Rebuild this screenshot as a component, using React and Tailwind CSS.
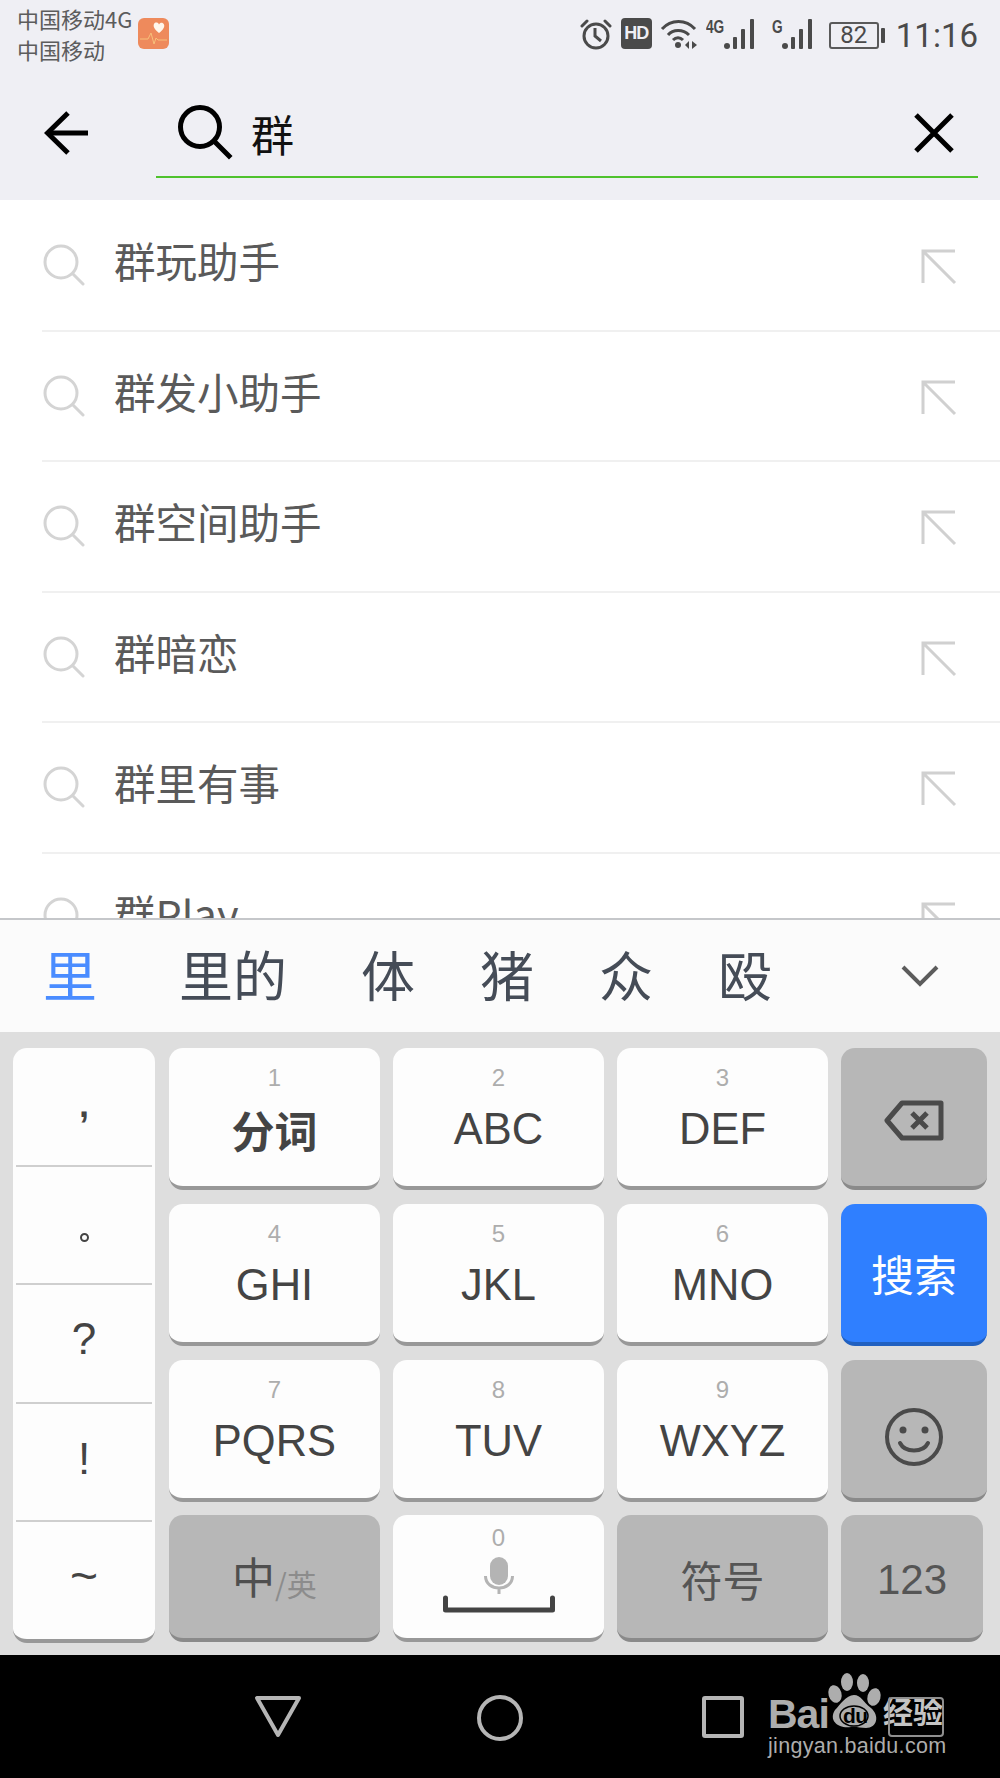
import React from 'react';

const cjk = "font-['Noto_Sans_CJK_SC','Liberation_Sans',sans-serif]";
const latin = "font-['Liberation_Sans','Noto_Sans_CJK_SC',sans-serif]";

const Bars = () => (
  <svg width="33" height="32" viewBox="0 0 33 32" className="text-[#4a4a4a]" fill="currentColor">
    <circle cx="3" cy="27" r="3" />
    <rect x="9" y="18" width="4" height="12" rx="1" />
    <rect x="17" y="10" width="4" height="20" rx="1" />
    <rect x="26" y="0" width="4" height="30" rx="1" />
  </svg>
);

const StatusBar = () => (
  <div className="h-[74px] flex items-start pt-[3px] bg-[#efeff4]">
    <div className={`ml-[17px] text-[22px] leading-[30.5px] text-[#5c5c5c] ${cjk}`}>
      <div>中国移动4G</div>
      <div>中国移动</div>
    </div>
    <svg width="31" height="31" viewBox="0 0 31 31" className="ml-[6px] mt-[15px]">
      <rect width="31" height="31" rx="6" fill="#ee8a5c" />
      <path d="M21 15 C16 11 15 8 16 6 C17 4 20 4 21 6.500 C22 4 25 4 26 6.500 C27 9 25 12 21 15Z" fill="#fff6ec" />
      <path d="M2 21 H10 L13 15 L16 26 L18 20 L20 22 H29" fill="none" stroke="#f7c07a" strokeWidth="1" />
    </svg>
    <div className="ml-auto flex items-start pr-[22px] pt-[15px]">
      {/* alarm */}
      <svg width="32" height="32" viewBox="0 0 32 32" fill="none" stroke="#4a4a4a" strokeWidth="3">
        <circle cx="16" cy="18" r="12" />
        <path d="M15 10 V18 L21 23" strokeWidth="3" />
        <path d="M2 8 L7 3 M25 3 L30 8" strokeLinecap="round" />
      </svg>
      {/* hd */}
      <div className={`ml-[9px] w-[31px] h-[31px] rounded-[4px] bg-[#4a4a4a] text-[#efeff4] text-[18px] leading-[31px] font-bold text-center tracking-[-1px] ${latin}`}>HD</div>
      {/* wifi */}
      <svg width="38" height="32" viewBox="0 0 38 32" fill="none" stroke="#4a4a4a" strokeWidth="3" className="ml-[8px]">
        <path d="M2 11 C11 1 26 1 35 11" />
        <path d="M8 17 C13 11 23 11 29 17" />
        <path d="M13 22 C16 19 20 19 23 22" />
        <circle cx="18" cy="27" r="3" fill="#4a4a4a" stroke="none" />
        <path d="M29 23 V31 L25 27Z M32 23 V31 L37 27Z" fill="#4a4a4a" stroke="none" />
      </svg>
      <div className="ml-[8px] flex items-start">
        <span className={`w-[18px] text-[19px] leading-[17px] font-bold text-[#4a4a4a] origin-left scale-x-[0.72] ${latin}`}>4G</span>
        <div className="mt-[1px]"><Bars /></div>
      </div>
      <div className="ml-[15px] flex items-start">
        <span className={`w-[10px] text-[19px] leading-[17px] font-bold text-[#4a4a4a] origin-left scale-x-[0.72] ${latin}`}>G</span>
        <div className="mt-[1px]"><Bars /></div>
      </div>
      <div className="ml-[14px] mt-[4px] flex items-center">
        <div className="w-[50px] h-[27px] rounded-[3px] border-2 border-[#5a5a5a] text-[#4a4a4a] text-[24px] leading-[23px] text-center font-['Roboto',sans-serif]">82</div>
        <div className="ml-[2px] w-[4px] h-[15px] rounded-[1px] bg-[#4a4a4a]" />
      </div>
      <div className="ml-[11px] text-[33px] leading-[36px] text-[#4a4a4a] font-['Roboto',sans-serif]">11:16</div>
    </div>
  </div>
);

const SearchHeader = () => (
  <div className="h-[126px] flex items-start bg-[#efeff4]">
    <svg width="46" height="46" viewBox="0 0 46 46" fill="none" stroke="#000" strokeWidth="5" className="ml-[44px] mt-[36px]">
      <path d="M44 23 H4" />
      <path d="M24 3 L3.500 23 L24 43" />
    </svg>
    <div className="ml-[66px] w-[822px] h-[104px] border-b-2 border-[#4fc22d] flex items-start">
      <svg width="56" height="56" viewBox="0 0 56 56" fill="none" stroke="#000" strokeWidth="5" className="ml-[21px] mt-[30px]">
        <circle cx="23" cy="23" r="19.500" />
        <path d="M37 37 L52 52" strokeLinecap="square" />
      </svg>
      <span className={`ml-[18px] mt-[31px] text-[43px] leading-[56px] text-[#111] ${cjk}`}>群</span>
      <svg width="42" height="42" viewBox="0 0 42 42" fill="none" stroke="#000" strokeWidth="5" className="ml-auto mr-[23px] mt-[38px]">
        <path d="M3 3 L39 39 M39 3 L3 39" />
      </svg>
    </div>
  </div>
);

const SuggestRow = ({ text }) => (
  <div className="h-[130.6px] shrink-0 ml-[42px] border-b-2 border-[#f0f0f0] flex items-start pt-[43px] pr-[42px]">
    <svg width="42" height="42" viewBox="0 0 42 42" fill="none" stroke="#d4d4d4" strokeWidth="3" className="ml-[1px]">
      <circle cx="18" cy="18" r="16" />
      <path d="M30 30 L40 40" strokeLinecap="round" />
    </svg>
    <span className={`ml-[29px] -mt-[10px] text-[41.5px] leading-[52px] text-[#5a5a5a] ${cjk}`}>{text}</span>
    <svg width="36" height="36" viewBox="0 0 36 36" fill="none" stroke="#d0d0d0" strokeWidth="3" className="ml-auto mt-[5px] -translate-x-[1px]">
      <path d="M34 2 H2 V34 M2 2 L34 34" />
    </svg>
  </div>
);

const Key = ({ digit, children, className = '' }) => (
  <div className={`h-[142px] w-[211px] rounded-[14px] bg-[#fdfdfd] border-b-[4px] border-[#989898] flex flex-col items-center ${className}`}>
    <span className={`mt-[15px] text-[24px] leading-[30px] text-[#adadad] ${latin}`}>{digit}</span>
    <span className={`mt-[8px] text-[43.5px] leading-[56px] text-[#444] ${latin}`}>{children}</span>
  </div>
);

const FnKey = ({ children, className = '' }) => (
  <div className={`rounded-[14px] bg-[#b7b7b7] border-b-[4px] border-[#8a8a8a] flex items-center justify-center text-[#555] text-[42px] ${latin} ${className}`}>
    {children}
  </div>
);

const Punct = ({ children, last }) => (
  <div className={`flex-1 mx-[3px] flex items-center justify-center text-[#444] text-[44px] ${latin} ${last ? '' : 'border-b-2 border-[#cfcfcf]'}`}>
    {children}
  </div>
);

const Keyboard = () => (
  <div className="h-[623px] bg-[#dedede] pl-[13px] pt-[16px] flex">
    <div className="w-[142px] h-[595px] rounded-[14px] bg-[#fdfdfd] border-b-[4px] border-[#989898] flex flex-col">
      <Punct><span className="-mt-[2px] text-[36px] font-bold">,</span></Punct>
      <Punct><span className="w-[9px] h-[9px] mt-[26px] rounded-full border-2 border-[#444]" /></Punct>
      <Punct><span className="-mt-[8px]">?</span></Punct>
      <Punct><span className="-mt-[6px]">!</span></Punct>
      <Punct last><span className="-mt-[10px] text-[48px]">~</span></Punct>
    </div>
    <div className="ml-[14px] flex flex-col gap-y-[14px]">
      <div className="flex gap-x-[13px]">
        <Key digit="1" className={cjk}><b className={`text-[#444] text-[43px] font-bold ${cjk}`}>分词</b></Key>
        <Key digit="2">ABC</Key>
        <Key digit="3">DEF</Key>
        <FnKey className="w-[146px] h-[142px]">
          <svg width="60" height="42" viewBox="0 0 60 42" fill="none" stroke="#4a4a4a" strokeWidth="5" strokeLinejoin="round" className="mt-[8px]">
            <path d="M18 3 H57 V38 H18 L3 20.500Z" />
            <path d="M28 13 L43 28 M43 13 L28 28" />
          </svg>
        </FnKey>
      </div>
      <div className="flex gap-x-[13px]">
        <Key digit="4">GHI</Key>
        <Key digit="5">JKL</Key>
        <Key digit="6">MNO</Key>
        <div className={`w-[146px] h-[142px] rounded-[14px] bg-[#2f7fff] border-b-[4px] border-[#2160c0] flex items-center justify-center text-white text-[43px] ${cjk}`}>搜索</div>
      </div>
      <div className="flex gap-x-[13px]">
        <Key digit="7">PQRS</Key>
        <Key digit="8">TUV</Key>
        <Key digit="9">WXYZ</Key>
        <FnKey className="w-[146px] h-[142px]">
          <svg width="60" height="60" viewBox="0 0 60 60" fill="none" stroke="#4a4a4a" strokeWidth="4" className="mt-[16px]">
            <circle cx="30" cy="30" r="27" />
            <circle cx="19" cy="23" r="3.500" fill="#4a4a4a" stroke="none" />
            <circle cx="41" cy="23" r="3.500" fill="#4a4a4a" stroke="none" />
            <path d="M16 36 C21 46 39 46 44 36" strokeLinecap="round" />
          </svg>
        </FnKey>
      </div>
      <div className="flex gap-x-[13px] -mt-[1px]">
        <FnKey className="w-[211px] h-[127px]">
          <span className={`-mt-[2px] text-[43px] text-[#4f4f4f] ${cjk}`}>中</span>
          <span className={`mt-[14px] text-[30px] text-[#8c8c8c] ${cjk}`}>/英</span>
        </FnKey>
        <div className="w-[211px] h-[127px] rounded-[14px] bg-[#fdfdfd] border-b-[4px] border-[#989898] flex flex-col items-center">
          <span className={`mt-[8px] text-[24px] leading-[30px] text-[#adadad] ${latin}`}>0</span>
          <svg width="112" height="64" viewBox="0 0 112 64" fill="none" className="-mt-[2px]">
            <rect x="47" y="6" width="18" height="28" rx="9" fill="#b4b4b4" />
            <path d="M42.500 25 C42.500 41 69.500 41 69.500 25 M56 37 V43" stroke="#b4b4b4" strokeWidth="3" />
            <path d="M2.500 47 V59 H109.500 V47" stroke="#444" strokeWidth="5" strokeLinecap="round" strokeLinejoin="round" />
          </svg>
        </div>
        <FnKey className="w-[211px] h-[127px]"><span className={`mt-[3px] ${cjk}`}>符号</span></FnKey>
        <FnKey className="w-[142px] h-[127px]"><span className="mt-[6px]">123</span></FnKey>
      </div>
    </div>
  </div>
);

const Watermark = () => (
  <div className="absolute left-[768px] top-[1671px] w-[180px] h-[90px] text-[#adadad]">
    <span className={`absolute left-0 top-[20px] text-[41px] leading-[46px] font-bold tracking-[-1px] ${latin}`}>Bai</span>
    <svg width="60" height="60" viewBox="0 0 60 60" className="absolute left-[56px] top-0" fill="currentColor">
      <ellipse cx="11" cy="23" rx="6.500" ry="9" transform="rotate(-15 11 23)" />
      <ellipse cx="23" cy="11" rx="6" ry="9" />
      <ellipse cx="39" cy="12" rx="6" ry="9" />
      <ellipse cx="50" cy="26" rx="6.500" ry="9" transform="rotate(15 50 26)" />
      <path d="M30 24 C37 24 39 31 47 37 C56 45 53 57 42 57 C36 57 32 55 27 56 C15 58 4 50 11 39 C16 34 22 24 30 24Z" />
      <ellipse cx="30" cy="45" rx="14" ry="10" fill="none" stroke="#000" strokeWidth="1.500" />
    </svg>
    <span className={`absolute left-[75px] top-[32px] text-[21px] leading-[26px] font-bold text-black tracking-[-0.5px] ${latin}`}>du</span>
    <span className={`absolute left-[115px] top-[20px] text-[30px] leading-[38px] font-bold text-[#c4c4c4] ${cjk}`}>经验</span>
    <div className="absolute left-[120px] top-[26px] w-[56px] h-[40px] rounded-[4px] border-2 border-[#8f8f8f]" />
    <span className={`absolute left-0 top-[62px] text-[21.5px] leading-[26px] tracking-[0.3px] whitespace-nowrap ${latin}`}>jingyan.baidu.com</span>
  </div>
);

const NavBar = () => (
  <div className="h-[123px] bg-black flex items-start pt-[40px]">
    <svg width="48" height="44" viewBox="0 0 48 44" fill="none" stroke="#b5b5b5" strokeWidth="4" strokeLinejoin="round" className="ml-[254px]">
      <path d="M3 3 H45 L24 40Z" />
    </svg>
    <svg width="46" height="46" viewBox="0 0 46 46" fill="none" stroke="#b5b5b5" strokeWidth="4" className="ml-[175px]">
      <circle cx="23" cy="23" r="21" />
    </svg>
    <svg width="42" height="42" viewBox="0 0 42 42" fill="none" stroke="#b5b5b5" strokeWidth="4" strokeLinejoin="round" className="ml-[179px] mt-[1px]">
      <rect x="2" y="2" width="38" height="38" rx="1" />
    </svg>
  </div>
);

export default function App() {
  const rows = ['群玩助手', '群发小助手', '群空间助手', '群暗恋', '群里有事', '群Play'];
  return (
    <div className={`relative w-[1000px] h-[1778px] overflow-hidden bg-white ${cjk}`}>
      <StatusBar />
      <SearchHeader />
      <div className="h-[718px] pt-[1px] overflow-hidden flex flex-col bg-white">
        {rows.map((r) => <SuggestRow key={r} text={r} />)}
      </div>
      {/* candidates */}
      <div className={`h-[114px] bg-[#fbfbfb] border-t-2 border-[#c5c7ca] flex items-center pb-[4px] text-[54px] leading-[60px] text-[#454c57] ${cjk}`}>
        <span className="ml-[43px] text-[#4a8cff]">里</span>
        <span className="ml-[82px]">里的</span>
        <span className="ml-[74px]">体</span>
        <span className="ml-[65px]">猪</span>
        <span className="ml-[65px]">众</span>
        <span className="ml-[65px]">殴</span>
        <svg width="38" height="24" viewBox="0 0 38 24" fill="none" stroke="#5c5c5c" strokeWidth="4" className="ml-[129px] mt-[4px]">
          <path d="M2 3 L19 20 L36 3" />
        </svg>
      </div>
      <Keyboard />
      <NavBar />
      <Watermark />
    </div>
  );
}
